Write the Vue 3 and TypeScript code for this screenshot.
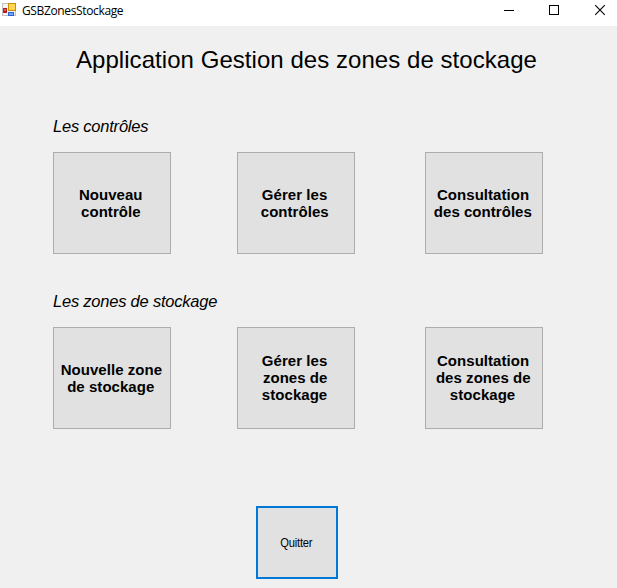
<script setup lang="ts">
interface Section {
  title: string
  actions: string[][]
}

const sections: Section[] = [
  {
    title: 'Les contrôles',
    actions: [
      ['Nouveau', 'contrôle'],
      ['Gérer les', 'contrôles'],
      ['Consultation', 'des contrôles'],
    ],
  },
  {
    title: 'Les zones de stockage',
    actions: [
      ['Nouvelle zone', 'de stockage'],
      ['Gérer les', 'zones de', 'stockage'],
      ['Consultation', 'des zones de', 'stockage'],
    ],
  },
]
</script>

<template>
  <div class="window">
    <header class="titlebar">
      <svg class="app-icon" width="16" height="16" viewBox="0 0 16 16" shape-rendering="crispEdges">
        <rect x="0.5" y="1.5" width="13" height="12" fill="#f4f4f4" stroke="#c3c3c3" />
        <rect x="1" y="6" width="4" height="5" fill="#b5201c" />
        <rect x="2" y="7" width="2" height="2" fill="#e0584c" />
        <rect x="6" y="1" width="8" height="8" fill="#c98d0a" />
        <rect x="7" y="2" width="6" height="6" fill="#ffd551" />
        <rect x="6" y="10" width="6" height="4" fill="#2c62d2" />
        <rect x="7" y="11" width="4" height="2" fill="#72a4f7" />
      </svg>
      <span class="caption">GSBZonesStockage</span>
      <div class="controls">
        <svg width="46" height="26" viewBox="0 0 46 26" shape-rendering="crispEdges">
          <path d="M18 10.5h10" stroke="#000" />
        </svg>
        <svg width="46" height="26" viewBox="0 0 46 26" shape-rendering="crispEdges">
          <rect x="17.5" y="5.5" width="9" height="9" fill="none" stroke="#000" />
        </svg>
        <svg width="46" height="26" viewBox="0 0 46 26">
          <path d="M17.2 5.2l9.6 9.6M26.8 5.2l-9.6 9.6" stroke="#000" stroke-width="1.1" />
        </svg>
      </div>
    </header>
    <main>
      <h1>Application Gestion des zones de stockage</h1>
      <section v-for="section in sections" :key="section.title">
        <h2>{{ section.title }}</h2>
        <div class="actions">
          <button v-for="lines in section.actions" :key="lines.join(' ')" type="button">
            <span v-for="line in lines" :key="line">{{ line }}</span>
          </button>
        </div>
      </section>
      <button class="quit" type="button"><span>Quitter</span></button>
    </main>
  </div>
</template>

<style>
body {
  background: #f0f0f0;
}
</style>

<style scoped>
.window {
  width: 617px;
  height: 588px;
  overflow: hidden;
  box-sizing: border-box;
  background: #f0f0f0;
  color: #000;
  font-family: "Liberation Sans", Arial, sans-serif;
}
.titlebar {
  height: 26px;
  display: flex;
  align-items: flex-start;
  background: #fff;
}
.app-icon {
  margin: 2px 0 0 2px;
}
.caption {
  margin-left: 4px;
  font: 12px/22px "Open Sans", "Noto Sans", sans-serif;
  letter-spacing: -0.36px;
}
.controls {
  display: flex;
  margin-left: auto;
  margin-right: -7px;
}
main {
  display: flex;
  flex-direction: column;
}
h1 {
  margin: 18px 0 0 76px;
  height: 32px;
  font-size: 24px;
  line-height: 32px;
  font-weight: 400;
  letter-spacing: 0.05px;
  white-space: nowrap;
}
section {
  height: 135px;
  margin: 41px 0 0 53px;
}
section + section {
  margin-top: 40px;
}
h2 {
  margin: 0;
  height: 35px;
  font-size: 16.5px;
  line-height: 18px;
  font-weight: 400;
  font-style: italic;
  letter-spacing: -0.22px;
  white-space: nowrap;
}
.actions {
  display: grid;
  grid-template-columns: 184px 188px 118px;
}
button {
  width: 118px;
  height: 102px;
  box-sizing: border-box;
  padding: 1px 2px 0 0;
  display: flex;
  flex-direction: column;
  align-items: center;
  justify-content: center;
  border: 1px solid #adadad;
  border-radius: 0;
  background: #e1e1e1;
  color: #000;
  font: bold 14px/17px "Liberation Sans", Arial, sans-serif;
  white-space: nowrap;
}
button span {
  display: block;
  letter-spacing: 0.05px;
  transform: scaleX(1.07);
}
.quit {
  width: 82px;
  height: 73px;
  margin: 79px 0 0 256px;
  border: 2px solid #0078d7;
  font-size: 12px;
  font-weight: 400;
}
.quit span {
  letter-spacing: -0.2px;
  transform: scaleX(0.93);
}
</style>
